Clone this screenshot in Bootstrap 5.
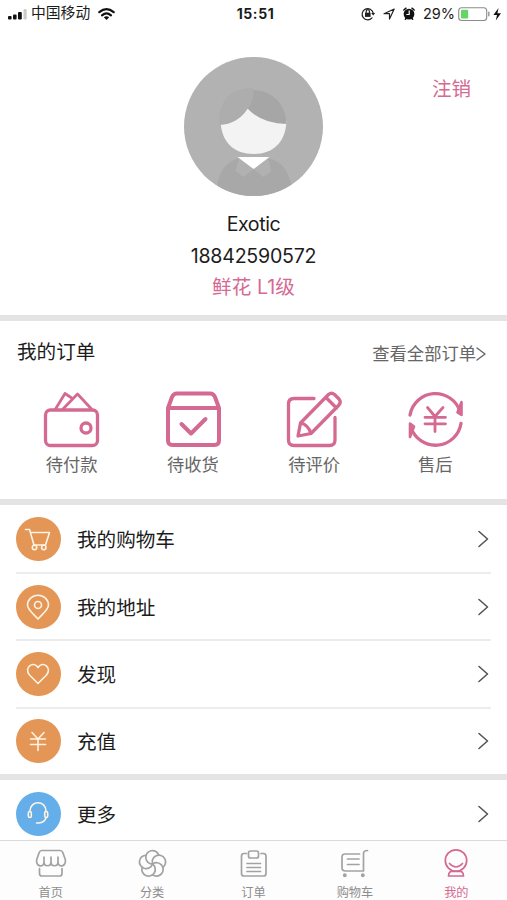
<!DOCTYPE html>
<html lang="zh-CN">
<head>
<meta charset="utf-8">
<meta name="viewport" content="width=device-width, initial-scale=1">
<title>我的</title>
<link href="https://cdn.jsdelivr.net/npm/bootstrap@5.3.0/dist/css/bootstrap.min.css" rel="stylesheet">
<style>
:root{--pink:#d46a92;--band:#e4e4e4}
body{font-family:Inter,"Noto Sans CJK SC",sans-serif;color:#1c1c1c;background:#fff;font-size:19.6px;line-height:1.2}
svg{display:block;flex:none;overflow:visible;fill:none;stroke-linecap:round;stroke-linejoin:round}
.screen{height:900px}
.status{height:28px;font-size:14.5px;flex:none}
.status .time{font-size:14px;letter-spacing:.6px;padding-left:2px}
.carrier{font-size:14.8px}
.side{flex:1 1 0}
.side.justify-content-end{padding-right:6px}
.profile{height:287px;flex:none}
.portrait{padding-top:29px}
.logout{color:var(--pink);font-size:19.5px}
.side-col{width:184px}
.side-col.text-end{padding:50px 36px 0 0}
.info{margin-top:13px}
.info div{height:31.5px;line-height:31.5px}
.name{letter-spacing:-.4px}
.phone{letter-spacing:-.25px}
.info .level{color:var(--pink);letter-spacing:.1px}
.band{height:6px;background:var(--band);flex:none}
.orders{height:178px;flex:none;color:#666}
.orders-head{padding:19px 21px 0 17px}
.orders h2{font-size:19.6px;line-height:24px;color:#1c1c1c}
.all,.kind{font-size:17.3px;line-height:22px}
.all{padding-top:3px}
.kinds{margin:27px 11px 0;height:84px}
.kind{width:121.3px}
.kind span{margin-top:6px}
.kind svg{stroke:var(--pink);stroke-width:3.3}
.kind .heavy{stroke-width:4}
.item{height:67.2px;margin-right:16px;padding-right:2px;flex:none}
.item+.item{border-top:2px solid #ececec}
.item span,.more span{padding-top:3px}
.item:first-child{padding-top:1px}
.disc{width:44.5px;height:44.5px;background:#e39656;margin-right:16.5px}
.disc svg{stroke:#fff3e4;stroke-width:1.6}
.disc.blue{background:#64aee9}
.more{height:60px;flex:none;padding:8px 18px 0 16px}
.tabs{height:60px;border-top:1px solid #dadada;background:#fdfdfd;color:#8d8d8d;font-size:12.2px;flex:none}
.tab{flex:1 1 0;padding-top:7px}
.tab svg{stroke:#a2a2a2;stroke-width:1.7}
.tab span{line-height:16px;margin-top:5px}
.tab.current{color:var(--pink)}
.tab.current svg{stroke:var(--pink)}
</style>
</head>
<body>
<main class="screen d-flex flex-column overflow-hidden">
  <header class="status d-flex align-items-center">
    <div class="side d-flex align-items-center ps-2">
      <svg width="19" height="11" viewBox="0 0 19 11" stroke="none"><g fill="#111"><rect x="0" y="7" width="3.6" height="3.6" rx="1"/><rect x="5" y="5.4" width="3.6" height="5.2" rx="1"/><rect x="10" y="3" width="3.8" height="7.6" rx="1"/></g><rect x="15.5" y="0" width="3.2" height="10.6" rx="1" fill="#ccc"/></svg>
      <span class="carrier ms-1">中国移动</span>
      <svg class="ms-2" width="17" height="12" viewBox="0 0 17 12" stroke="#111" stroke-width="2.2"><path d="M1.300 4.200Q8.500-1.800 15.700 4.200M4 7.300Q8.500 3.400 13 7.300"/><path d="M5.800 9.300Q8.500 7 11.200 9.300L8.500 12Z" fill="#111" stroke="none"/></svg>
    </div>
    <div class="time fw-bold">15:51</div>
    <div class="side d-flex align-items-center justify-content-end">
      <svg width="63" height="14" viewBox="362 6.500 63 14" stroke="#222" stroke-width="1.2"><path d="M374 17.3A5.6 5.6 0 1 1 375.2 12.5"/><path d="M373.2 12.4h4l-2 2.6z" fill="#222" stroke="none"/><rect x="367" y="12.2" width="5.6" height="4.2" fill="#222" stroke="none"/><path d="M368.2 12v-1.300a1.600 1.600 0 0 1 3.200 0V12"/><path d="M386 13.2L396.2 8.5 391.5 18.600V13.200Z"/><circle cx="411" cy="13.6" r="5.4" fill="#111" stroke="none"/><path d="M405.8 9.5L408 7.7M416.2 9.5L414 7.7M407.4 18.8l1-1.2M414.6 18.8l-1-1.2" stroke="#111" stroke-width="1.5"/><path d="M411.2 10.3V14H408.8" stroke="#fff"/></svg>
      <span>29%</span>
      <svg style="margin-left:3px" width="43" height="14" viewBox="458 6 43 14"><rect x="458.7" y="6.7" width="28" height="12.8" rx="3" stroke="#8c8c8c" stroke-width="1.1"/><rect x="461" y="8.7" width="7.2" height="8.8" rx="1" fill="#65d565"/><path d="M488.8 11.3v3.4" stroke="#999" stroke-width="1.5"/><path d="M498.6 7L493.4 14H497L495.8 19.4 501 12.2H497.4Z" fill="#111"/></svg>
    </div>
  </header>

  <section class="profile d-flex justify-content-between">
    <div class="side-col"></div>
    <div class="portrait d-flex flex-column align-items-center">
      <svg width="139" height="139" viewBox="184.5 57 139 139">
        <defs><clipPath id="avatar"><circle cx="254" cy="126.500" r="69.500"/></clipPath></defs>
        <g clip-path="url(#avatar)">
          <path d="M184 57h140v140H184z" fill="#b2b2b2"/>
          <path d="M216 200Q217 163 240 158L254 168 269 158Q292 163 294 200Z" fill="#a8a8a8"/>
          <path d="M240 157L254 169 244 177 236 171ZM268 157L254 169 264 177 272 171Z" fill="#b1b1b1"/>
          <path d="M238 157H270L254 169Z" fill="#fff"/>
          <path d="M221 121C222 143 235 154 254 154S286 143 287 121L248 108Z" fill="#f3f3f3"/>
          <path d="M252 90C272 90 286 103 287 124Q262 124 247.500 108Z" fill="#a6a6a6"/>
          <path d="M220 125C218 101 231 88 254 88Q255 101 248 109 238 124 220 125Z" fill="#adadad"/>
        </g>
      </svg>
      <div class="info text-center">
        <div class="name">Exotic</div>
        <div class="phone">18842590572</div>
        <div class="level">鲜花 L1级</div>
      </div>
    </div>
    <div class="side-col text-end"><span class="logout">注销</span></div>
  </section>
  <div class="band"></div>

  <section class="orders">
    <div class="orders-head d-flex justify-content-between">
      <h2 class="fw-normal mb-0">我的订单</h2>
      <div class="all d-flex align-items-center"><span>查看全部订单</span><svg width="10" height="14" viewBox="0 0 10 14" stroke="#666" stroke-width="1.4"><path d="M1 1L9 7 1 13"/></svg></div>
    </div>
    <div class="kinds d-flex">
      <div class="kind d-flex flex-column align-items-center">
        <svg width="56" height="56" viewBox="44.500 391.500 56 56"><rect x="46" y="409.500" width="52" height="35.500" rx="5"/><circle cx="86.500" cy="427.500" r="5"/><path d="M56 408.500L65.500 393 71.500 397M63.500 408.500L78 393.500 92 408.500" stroke-width="2.800"/></svg>
        <span>待付款</span>
      </div>
      <div class="kind d-flex flex-column align-items-center">
        <svg class="heavy" width="56" height="56" viewBox="165 391.500 56 56"><path d="M168 407.500H219V440Q219 444.500 214.500 444.500H172.500Q168 444.500 168 440ZM168 407.500L172 396.500Q173.500 393 177 393H210Q213.500 393 215 396.500L219 407.500M181.500 423.500L191 433 205.500 418.500"/></svg>
        <span>待收货</span>
      </div>
      <div class="kind d-flex flex-column align-items-center">
        <svg width="56" height="56" viewBox="286 391.500 56 56"><path d="M314 398H294Q288.500 398 288.500 403.500V439.500Q288.500 445 294 445H329.500Q335 445 335 439.500V417"/><path d="M298 435.500L300.500 422.500 328.500 394Q331.500 391.500 334.500 394L339 398.500Q341.500 401.500 339 404.500L311 433ZM326 397L336.500 407.500M300.500 422.500Q308 424 311 433"/></svg>
        <span>待评价</span>
      </div>
      <div class="kind d-flex flex-column align-items-center">
        <svg width="56" height="56" viewBox="407.500 391.500 56 56"><path d="M410.500 414.500A25.800 25.800 0 0 1 460.500 411M461.500 423A25.800 25.800 0 0 1 411.500 427"/><path d="M462 401.500V414.500L458 412ZM410.500 436.500V423L414.500 426Z" stroke-width="2.600"/><path d="M428 407L435.500 416 443.500 407M435.500 416V431M425.500 416.800H446M425.500 423.300H446" stroke-width="2.800"/></svg>
        <span>售后</span>
      </div>
    </div>
  </section>
  <div class="band"></div>

  <section class="ps-3">
    <div class="item d-flex align-items-center">
      <div class="disc rounded-circle d-flex align-items-center justify-content-center"><svg width="26" height="26" viewBox="25 526.500 26 26"><path d="M25.500 530H29.500L34 545.500H45.500L49.500 533H30.500"/><circle cx="34.500" cy="548" r="2.200"/><circle cx="43.800" cy="548" r="2.200"/></svg></div>
      <span class="me-auto">我的购物车</span>
      <svg width="11" height="18" viewBox="0 0 11 18" stroke="#555" stroke-width="1.600"><path d="M1 1.500L9.500 9 1 16.500"/></svg>
    </div>
    <div class="item d-flex align-items-center">
      <div class="disc rounded-circle d-flex align-items-center justify-content-center"><svg width="26" height="26" viewBox="26 593.500 26 26"><path d="M39 618.500C34 613 28.500 609 28.500 604.500A10.500 9.800 0 0 1 49.500 604.500C49.500 609 44 613 39 618.500Z"/><circle cx="39" cy="604.500" r="3.500"/></svg></div>
      <span class="me-auto">我的地址</span>
      <svg width="11" height="18" viewBox="0 0 11 18" stroke="#555" stroke-width="1.600"><path d="M1 1.500L9.500 9 1 16.500"/></svg>
    </div>
    <div class="item d-flex align-items-center">
      <div class="disc rounded-circle d-flex align-items-center justify-content-center"><svg width="26" height="26" viewBox="26 661 26 26"><path d="M39 683.500L30.500 675C24.500 668 34 660 39 667.500 44 660 53.500 668 47.500 675Z"/></svg></div>
      <span class="me-auto">发现</span>
      <svg width="11" height="18" viewBox="0 0 11 18" stroke="#555" stroke-width="1.600"><path d="M1 1.500L9.500 9 1 16.500"/></svg>
    </div>
    <div class="item d-flex align-items-center">
      <div class="disc rounded-circle d-flex align-items-center justify-content-center"><svg width="26" height="26" viewBox="26 728.500 26 26"><path d="M33 733L39 739.500 45 733M39 739.500V751M31.500 739.500H46.500M31.500 745H46.500"/></svg></div>
      <span class="me-auto">充值</span>
      <svg width="11" height="18" viewBox="0 0 11 18" stroke="#555" stroke-width="1.600"><path d="M1 1.500L9.500 9 1 16.500"/></svg>
    </div>
  </section>
  <div class="band"></div>
  <section class="more d-flex align-items-center">
    <div class="disc blue rounded-circle d-flex align-items-center justify-content-center"><svg width="26" height="26" viewBox="26 800.500 26 26"><path d="M31 810.500C31 799.500 47 799.500 47 810.500M47 817Q46 822 39.500 822.500H37.500"/><rect x="29.300" y="811" width="3" height="6" rx="1.500"/><rect x="45.700" y="811" width="3" height="6" rx="1.500"/></svg></div>
    <span class="me-auto">更多</span>
    <svg width="11" height="18" viewBox="0 0 11 18" stroke="#555" stroke-width="1.600"><path d="M1 1.500L9.500 9 1 16.500"/></svg>
  </section>

  <nav class="tabs d-flex">
    <div class="tab d-flex flex-column align-items-center">
      <svg width="32" height="32" viewBox="35.500 848 32 32"><path d="M42.500 850.500H60.500Q62.500 850.500 63.300 852.500L65.800 859.500C66.800 867 58.500 868 58.500 862V857M58.500 862C58.500 867 51.500 867 51.500 862V857M51.500 862C51.500 867 44.500 867 44.500 862V857M44.500 862C44.500 868 36.200 867 37.200 859.500L39.700 852.500Q40.500 850.500 42.500 850.500M40 868.500V873.500Q40 876 42.500 876H60Q62.500 876 62.500 873.500V868.500"/></svg>
      <span>首页</span>
    </div>
    <div class="tab d-flex flex-column align-items-center">
      <svg width="32" height="32" viewBox="-16.500 -16 32 32"><defs><path id="petal" d="M0 0A6.700 6.700 0 1 1 6.370-8.770"/></defs><use href="#petal"/><use href="#petal" transform="rotate(72)"/><use href="#petal" transform="rotate(144)"/><use href="#petal" transform="rotate(216)"/><use href="#petal" transform="rotate(288)"/></svg>
      <span>分类</span>
    </div>
    <div class="tab d-flex flex-column align-items-center">
      <svg width="32" height="32" viewBox="238 848 32 32"><path d="M246.500 853.500H244Q241.500 853.500 241.500 856V873.500Q241.500 876 244 876H263.500Q266 876 266 873.500V856Q266 853.500 263.500 853.500H261M247 863.500H260.500M247 867.500H260.500M247 871.500H260.500"/><rect x="248.500" y="851" width="10" height="7" rx="2"/></svg>
      <span>订单</span>
    </div>
    <div class="tab d-flex flex-column align-items-center">
      <svg width="32" height="32" viewBox="339 848 32 32"><path d="M359.500 854H345Q342 854 342 857V867.500Q342 871 345.500 871H363.500V853.500Q363.500 850.500 367.500 850.500M347.500 859H359M347.500 864.500H359"/><circle cx="344.800" cy="875.300" r="1.100" fill="#999"/><circle cx="362.800" cy="875.300" r="1.100" fill="#999"/></svg>
      <span>购物车</span>
    </div>
    <div class="tab current d-flex flex-column align-items-center">
      <svg width="32" height="32" viewBox="440 848 32 32"><circle cx="456" cy="860.500" r="10.700"/><path d="M449.500 863.500Q456 870.500 462.500 863.500M450.500 871.500H461.500Q463.500 873 463.500 876H448.500Q448.500 873 450.500 871.500"/></svg>
      <span>我的</span>
    </div>
  </nav>
</main>
<script src="https://cdn.jsdelivr.net/npm/bootstrap@5.3.0/dist/js/bootstrap.bundle.min.js"></script>
</body>
</html>
